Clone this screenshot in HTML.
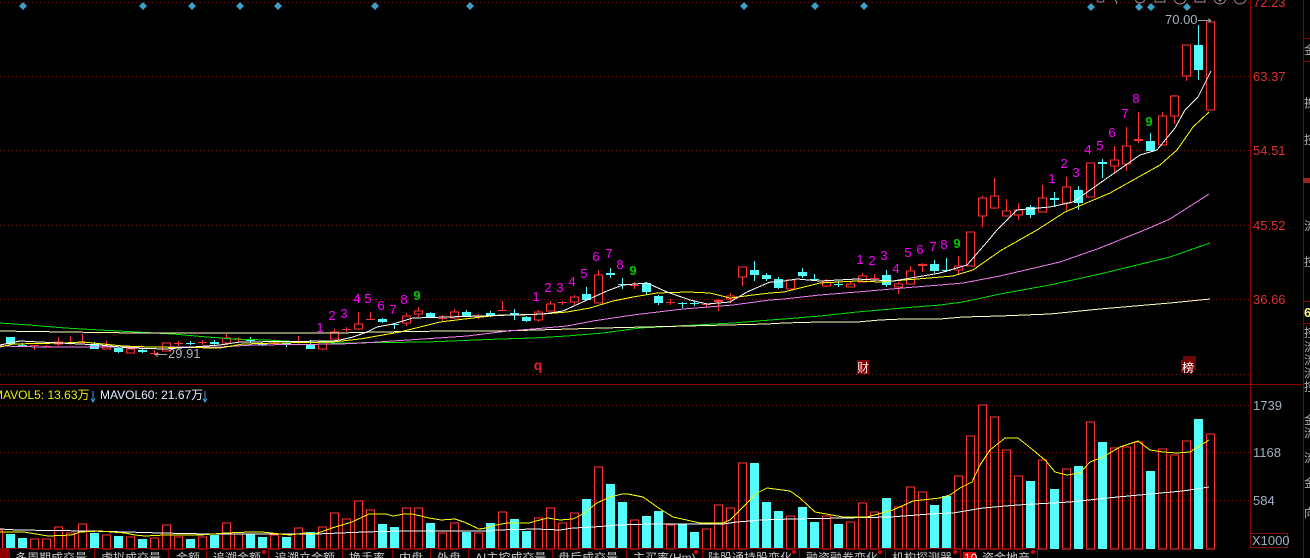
<!DOCTYPE html>
<html><head><meta charset="utf-8"><style>
html,body{margin:0;padding:0;background:#000;width:1310px;height:558px;overflow:hidden}
svg{display:block;position:absolute;left:0;top:0}
text{font-family:"Liberation Sans","Noto Sans CJK SC",sans-serif}
.n{font-size:13px;fill:#ff00ff;text-anchor:middle}
.g{font-size:13px;fill:#00c800;text-anchor:middle;font-weight:bold}
.a{font-size:13px;fill:#e03030}
.v{font-size:13px;fill:#a0b0c0}
.t{font-size:12px;fill:#c8c8c8;font-family:"Liberation Sans","Noto Sans CJK SC",sans-serif}
.r{font-size:12px;fill:#b0b0b0;font-family:"Liberation Sans","Noto Sans CJK SC",sans-serif}
</style></head><body>
<svg width="1310" height="558" viewBox="0 0 1310 558" xmlns="http://www.w3.org/2000/svg">
<rect width="1310" height="558" fill="#000"/>
<g shape-rendering="crispEdges">
<path d="M0 2.500H1250M0 76.500H1250M0 150.500H1250M0 225.500H1250M0 299.500H1250M0 374.500H1250M0 405.500H1250M0 452.500H1250M0 500.500H1250" stroke="#8c1010" stroke-dasharray="1 3" fill="none"/>
<path d="M0 384.500H1303M1250.500 0V548M1303.500 0V558M1303 38.500H1310M1303 61.500H1310M1303 301.500H1310M1303 323.500H1310" stroke="#8c0000" fill="none"/>
<rect x="1303" y="178" width="7" height="5" fill="#a02018"/>

<!-- red wicks -->
<path stroke="#ff3232" fill="none" d="M34.500 345V350M46.500 345V347M58.500 337V346M70.500 336V345M82.500 334V343M106.500 341V349M130.500 349V353M154.500 350V355M178.500 341V346M202.500 340V345M226.500 334V345M238.500 337V342M274.500 339V345M298.500 336V345M322.500 341V350M334.500 329V339M346.500 327V332M358.500 312V330M370.500 312V320M406.500 313V326M418.500 307V317M442.500 315V321M454.500 309V318M478.500 314V319M502.500 301V310M538.500 310V322M550.500 301V311M562.500 301V305M574.500 295V305M598.500 270V303M634.500 282V289M670.500 299V305M706.500 303V308M718.500 299V311M730.500 293V303M742.500 277V286M826.500 279V287M850.500 282V287M862.500 273V282M874.500 274V282M898.500 282V294M910.500 266V284M922.500 263V272M958.500 256V275M982.500 196V227M994.500 178V209M1006.500 199V216M1018.500 203V220M1042.500 185V212M1066.500 177V210M1114.500 146V173M1126.500 127V171M1138.500 112V143M1162.500 112V145M1174.500 95V124M1186.500 45V81"/>
<!-- red doji -->
<path stroke="#ff3232" fill="none" d="M30 345.500h9M42 346.500h9M66 343.500h9M78 342.500h9M150 353.500h9M174 343.500h9M198 342.500h9M234 339.500h9M270 343.500h9M294 342.500h9M342 329.500h9M366 319.500h9M438 318.500h9M474 316.500h9M498 310.500h9M558 302.500h9M630 285.500h9M666 302.500h9M702 304.500h9M870 278.500h9"/>
<path stroke="#ff3232" stroke-width="2" fill="none" d="M714 301h9M918 265h9M1134 140h9"/>
<!-- red bodies -->
<path stroke="#ff3232" fill="#000" d="M54.500 342h8V344h-8zM102.500 346h8V349h-8zM126.500 349h8V353h-8zM162.500 343h8V351h-8zM222.500 338h8V343h-8zM318.500 342h8V349h-8zM330.500 332h8V339h-8zM354.500 324h8V329h-8zM402.500 316h8V323h-8zM414.500 311h8V314h-8zM450.500 312h8V318h-8zM534.500 312h8V320h-8zM546.500 304h8V311h-8zM570.500 297h8V302h-8zM594.500 275h8V303h-8zM726.500 296h8V299h-8zM738.500 267h8V277h-8zM786.500 280h8V289h-8zM822.500 282h8V286h-8zM846.500 284h8V287h-8zM858.500 276h8V282h-8zM894.500 284h8V287h-8zM906.500 271h8V284h-8zM954.500 266h8V270h-8zM966.500 232h8V266h-8zM978.500 198h8V216h-8zM990.500 196h8V208h-8zM1002.500 211h8V216h-8zM1014.500 210h8V215h-8zM1038.500 198h8V212h-8zM1062.500 187h8V203h-8zM1086.500 163h8V197h-8zM1110.500 160h8V166h-8zM1122.500 146h8V164h-8zM1158.500 116h8V145h-8zM1170.500 96h8V116h-8zM1182.500 45h8V76h-8zM1206.500 22h8V110h-8z"/>
<!-- cyan wicks -->
<path stroke="#54fcfc" fill="none" d="M22.500 343V345M94.500 342V349M118.500 347V353M142.500 349V353M190.500 341V345M214.500 340V345M250.500 337V343M262.500 342V346M286.500 342V347M310.500 340V349M382.500 318V323M394.500 323V329M430.500 312V317M466.500 310V316M490.500 311V317M514.500 309V320M526.500 316V322M586.500 287V300M610.500 268V278M622.500 278V289M646.500 282V295M658.500 295V305M682.500 302V308M694.500 301V306M754.500 261V281M766.500 273V281M778.500 277V289M802.500 268V278M814.500 274V281M838.500 281V287M886.500 270V287M934.500 260V273M946.500 258V272M1030.500 205V218M1054.500 192V207M1078.500 186V210M1102.500 159V178M1150.500 133V151M1198.500 25V80"/>
<path stroke="#54fcfc" fill="none" d="M18 345.500h9M186 343.500h9M282 343.500h9M390 324.500h9M618 284.500h9M678 303.500h9M690 303.500h9M810 279.500h9M834 284.500h9M942 270.500h9"/>
<path stroke="#54fcfc" stroke-width="2" fill="none" d="M210 343h9M510 314h9M606 274h9M1050 199h9M1098 163h9"/>
<path fill="#54fcfc" d="M6 337h9V344h-9zM90 344h9V349h-9zM114 348h9V352h-9zM138 350h9V352h-9zM246 339h9V341h-9zM258 343h9V345h-9zM306 345h9V349h-9zM378 319h9V322h-9zM426 313h9V317h-9zM462 312h9V316h-9zM486 313h9V316h-9zM522 317h9V321h-9zM582 294h9V300h-9zM642 283h9V292h-9zM654 296h9V303h-9zM750 270h9V275h-9zM762 275h9V279h-9zM774 279h9V288h-9zM798 272h9V276h-9zM882 275h9V285h-9zM930 264h9V271h-9zM1026 207h9V215h-9zM1074 190h9V203h-9zM1146 141h9V151h-9zM1194 45h9V70h-9z"/>

<!-- price MAs -->
<polyline fill="none" stroke="#00e000" points="0,323 29,325 65,328 100,330 137,332 173,334 207,337 233,339 267,340 303,342 340,343 427,342 500,339 533,338 567,336 603,333 640,328 677,326 733,323 770,320 784,319 820,316 857,312 880,310 903,308 940,305 963,302 1000,294 1050,285 1100,274 1170,257 1210,243"/>
<polyline fill="none" stroke="#ffffc0" points="0,331 65,332 137,333 270,333 340,333 377,332 447,331 500,331 537,330 603,328 687,326 767,324 784,323 820,322 857,322 880,320 903,319 940,319 963,317 1000,316 1050,314 1100,309 1170,303 1210,299"/>
<polyline fill="none" stroke="#f080f0" points="0,346 42,347 65,347 87,347 133,347 167,347 220,347 253,345 340,344 363,343 423,339 467,336 508,331 533,329 567,326 593,321 633,315 683,309 733,305 770,300 784,299 820,295 857,292 880,290 903,288 940,285 963,283 1000,276 1060,262 1100,248 1147,229 1170,219 1209,194"/>
<polyline fill="none" stroke="#ffff00" points="0,347 13,344 63,343 83,342 123,346 150,347 220,348 243,344 277,343 333,342 360,339 400,332 440,322 473,318 500,315 520,315 543,314 567,312 590,308 613,301 633,297 657,293 688,292 710,293 730,298 753,295 770,293 784,292 820,283 857,281 880,282 917,279 953,276 973,270 1000,251 1037,230 1065,212 1110,193 1160,165 1177,150 1193,127 1209,112"/>
<polyline fill="none" stroke="#ffffff" points="0,345 20,341 60,343 100,345 130,348 165,349 220,345 240,342 333,341 340,340 353,337 367,332 377,327 393,324 413,318 447,317 513,315 543,314 563,311 587,300 607,291 623,285 647,283 667,292 690,300 707,304 730,302 747,292 770,282 777,282 797,279 820,281 857,279 893,281 917,277 940,273 967,265 987,242 997,230 1017,210 1050,207 1073,202 1093,188 1140,155 1157,150 1175,128 1185,110 1198,97 1211,71"/>

<!-- volume -->
<path stroke="#ff3232" fill="none" d="M-5.500 530h8V549h-8zM30.500 539h8V549h-8zM42.500 539h8V549h-8zM54.500 527h8V549h-8zM66.500 533h8V549h-8zM78.500 524h8V549h-8zM102.500 535h8V549h-8zM126.500 537h8V549h-8zM150.500 538h8V549h-8zM162.500 525h8V549h-8zM174.500 537h8V549h-8zM198.500 537h8V549h-8zM222.500 523h8V549h-8zM234.500 534h8V549h-8zM270.500 535h8V549h-8zM294.500 528h8V549h-8zM318.500 527h8V549h-8zM330.500 513h8V549h-8zM342.500 519h8V549h-8zM354.500 501h8V549h-8zM366.500 510h8V549h-8zM402.500 508h8V549h-8zM414.500 508h8V549h-8zM438.500 533h8V549h-8zM450.500 523h8V549h-8zM474.500 533h8V549h-8zM498.500 512h8V549h-8zM534.500 518h8V549h-8zM546.500 508h8V549h-8zM558.500 523h8V549h-8zM570.500 513h8V549h-8zM594.500 467h8V549h-8zM630.500 520h8V549h-8zM666.500 525h8V549h-8zM702.500 529h8V549h-8zM714.500 505h8V549h-8zM726.500 508h8V549h-8zM738.500 463h8V549h-8zM786.500 516h8V549h-8zM822.500 516h8V549h-8zM846.500 522h8V549h-8zM858.500 503h8V549h-8zM870.500 512h8V549h-8zM894.500 507h8V549h-8zM906.500 487h8V549h-8zM918.500 492h8V549h-8zM954.500 476h8V549h-8zM966.500 436h8V549h-8zM978.500 405h8V549h-8zM990.500 417h8V549h-8zM1002.500 450h8V549h-8zM1014.500 476h8V549h-8zM1038.500 460h8V549h-8zM1062.500 469h8V549h-8zM1086.500 422h8V549h-8zM1110.500 448h8V549h-8zM1122.500 447h8V549h-8zM1134.500 442h8V549h-8zM1158.500 449h8V549h-8zM1170.500 455h8V549h-8zM1182.500 441h8V549h-8zM1206.500 434h8V549h-8z"/>
<path fill="#54fcfc" d="M6 534h9V549h-9zM18 538h9V549h-9zM90 533h9V549h-9zM114 536h9V549h-9zM138 539h9V549h-9zM186 539h9V549h-9zM210 535h9V549h-9zM246 534h9V549h-9zM258 537h9V549h-9zM282 537h9V549h-9zM306 532h9V549h-9zM378 524h9V549h-9zM390 527h9V549h-9zM426 523h9V549h-9zM462 532h9V549h-9zM486 523h9V549h-9zM510 519h9V549h-9zM522 531h9V549h-9zM582 499h9V549h-9zM606 484h9V549h-9zM618 502h9V549h-9zM642 516h9V549h-9zM654 511h9V549h-9zM678 524h9V549h-9zM690 532h9V549h-9zM750 463h9V549h-9zM762 502h9V549h-9zM774 511h9V549h-9zM798 507h9V549h-9zM810 522h9V549h-9zM834 524h9V549h-9zM882 498h9V549h-9zM930 505h9V549h-9zM942 496h9V549h-9zM1026 481h9V549h-9zM1050 489h9V549h-9zM1074 466h9V549h-9zM1098 442h9V549h-9zM1146 471h9V549h-9zM1194 419h9V549h-9z"/>
<polyline fill="none" stroke="#ffffff" points="0,529 17,530 88,531 127,532 161,533 208,534 316,534 340,533 364,532 400,531 490,531 496,530 535,529 560,530 573,528 593,527 607,526 617,525 653,524 723,524 737,522 750,521 760,520 793,519 843,518 890,517 917,515 930,514 953,513 983,508 1017,505 1070,502 1107,498 1150,494 1183,491 1209,487"/>
<polyline fill="none" stroke="#ffff00" points="0,532 24,532 36,534 48,536 72,535 80,532 100,531 112,532 125,533 135,535 145,536 165,535 200,535 226,533 250,532 262,532 280,534 290,535 305,533 314,534 321,532 332,528 352,522 369,514 386,514 393,516 404,514 412,514 421,516 429,518 441,520 455,519 464,522 479,529 486,528 496,525 507,523 529,523 536,521 548,518 560,520 573,519 583,514 597,503 610,497 622,494 628,494 643,497 660,509 673,517 700,523 723,523 730,520 743,507 757,493 767,488 790,491 800,498 815,512 843,517 867,517 893,510 913,501 940,498 950,495 960,488 972,482 980,465 990,450 1005,438 1018,438 1033,450 1045,460 1055,472 1067,475 1080,473 1090,462 1103,457 1120,447 1138,441 1150,450 1163,452 1177,453 1190,452 1209,440"/>

<!-- bottom bar -->
<path stroke="#8c0000" fill="none" d="M0 548.500H1037M9.500 549V558M94.500 549V558M168.500 549V558M206.500 549V558M268.500 549V558M342.500 549V558M392.500 549V558M430.500 549V558M468.500 549V558M552.500 549V558M626.500 549V558M702.500 549V558M799.500 549V558M885.500 549V558M960.500 549V558M1037.500 549V558"/>
<rect x="0" y="549" width="9" height="9" fill="#8c0000"/>
<rect x="963" y="552" width="13" height="6" fill="#e00000"/>
<path d="M1250.500 533.500H1287.500V547.500H1250.500z" stroke="#7a1010" fill="none"/>
<rect x="857" y="360" width="12" height="14" fill="#800000"/>
<rect x="1183" y="356" width="13" height="14" fill="#6a0808"/>
<rect x="1181" y="360" width="13" height="13" fill="#800000"/>
</g>

<!-- diamonds -->
<g fill="#3aa0c8">
<path d="M23 2l4 4-4 4-4-4zM143 2l4 4-4 4-4-4zM192 2l4 4-4 4-4-4zM240 2l4 4-4 4-4-4zM278 2l4 4-4 4-4-4zM375 2l4 4-4 4-4-4zM470 2l4 4-4 4-4-4zM744 2l4 4-4 4-4-4zM815 2l4 4-4 4-4-4zM864 2l4 4-4 4-4-4zM1091 3l4 4-4 4-4-4zM1139 3l4 4-4 4-4-4zM1151 3l4 4-4 4-4-4zM1187 3l4 4-4 4-4-4z"/>
</g>
<!-- top clipped icons -->
<g fill="none" stroke="#909090" stroke-width="1">
<path d="M1097 0l1 2 5 0 1-2"/>
<path d="M1115 0l2 2-1 2"/>
<circle cx="1140" cy="-2" r="5"/>
<path d="M1155 -4h10v6h-10z"/>
<circle cx="1180" cy="-2" r="6"/>
<path d="M1195 -4h10v6h-10z"/>
<circle cx="1220" cy="-2" r="6"/>
<circle cx="1240" cy="-2" r="6"/>
</g>
<circle cx="1220" cy="0" r="1.500" fill="#909090"/>

<!-- TD numbers -->
<g>
<text class="n" x="320" y="332">1</text><text class="n" x="332" y="320">2</text><text class="n" x="344" y="318">3</text><text class="n" x="357" y="303">4</text><text class="n" x="368" y="303">5</text><text class="n" x="381" y="310">6</text><text class="n" x="393" y="314">7</text><text class="n" x="404" y="304">8</text><text class="g" x="417" y="300">9</text>
<text class="n" x="536" y="301">1</text><text class="n" x="548" y="292">2</text><text class="n" x="560" y="292">3</text><text class="n" x="572" y="286">4</text><text class="n" x="584" y="278">5</text><text class="n" x="596" y="261">6</text><text class="n" x="609" y="258">7</text><text class="n" x="620" y="269">8</text><text class="g" x="633" y="275">9</text>
<text class="n" x="860" y="264">1</text><text class="n" x="872" y="265">2</text><text class="n" x="884" y="260">3</text><text class="n" x="896" y="273">4</text><text class="n" x="908" y="257">5</text><text class="n" x="920" y="254">6</text><text class="n" x="933" y="251">7</text><text class="n" x="944" y="249">8</text><text class="g" x="957" y="248">9</text>
<text class="n" x="1052" y="183">1</text><text class="n" x="1064" y="168">2</text><text class="n" x="1076" y="177">3</text><text class="n" x="1088" y="154">4</text><text class="n" x="1100" y="150">5</text><text class="n" x="1112" y="137">6</text><text class="n" x="1125" y="118">7</text><text class="n" x="1136" y="103">8</text><text class="g" x="1149" y="126">9</text>
</g>

<!-- hi/lo -->
<path d="M155 354.500h12M155 354.500l3-2M155 354.500l3 2" stroke="#a0a0a0" fill="none"/>
<text x="168" y="358" font-size="13" fill="#a8b0b8">29.91</text>
<text x="1165" y="24" font-size="13" fill="#a8b0b8">70.00</text>
<path d="M1198 20.500h13M1211 20.500l-3-2M1211 20.500l-3 2" stroke="#a0a0a0" fill="none"/>

<!-- axis labels -->
<text class="a" x="1253" y="7">72.23</text>
<text class="a" x="1253" y="81">63.37</text>
<text class="a" x="1253" y="155">54.51</text>
<text class="a" x="1253" y="230">45.52</text>
<text class="a" x="1253" y="304">36.66</text>
<text class="v" x="1253" y="410">1739</text>
<text class="v" x="1253" y="457">1168</text>
<text class="v" x="1253" y="505">584</text>
<text class="v" x="1252" y="545" font-size="13">X1000</text>

<!-- event marks -->
<text x="538" y="370" font-size="14" fill="#e82020" text-anchor="middle" font-weight="bold">q</text>
<text x="863" y="372" font-size="12" fill="#ffe0e0" text-anchor="middle">财</text>
<text x="1188" y="372" font-size="12" fill="#ffffff" text-anchor="middle">榜</text>

<!-- legend -->
<text x="-7" y="399" font-size="12" fill="#f0f000">MAVOL5: 13.63万</text>
<text x="100" y="399" font-size="12" fill="#e0f0ff">MAVOL60: 21.67万</text>
<path d="M93 391V401.500M91 398.500l2 3.500 2-3.500M205 391V401.500M203 398.500l2 3.500 2-3.500" stroke="#3aa0e0" fill="none"/>

<!-- tabs -->
<g>
<text class="t" x="15" y="562">多周期成交量</text>
<text class="t" x="101" y="562">虚拟成交量</text>
<text class="t" x="176" y="562">金额</text>
<text class="t" x="213" y="562">追溯金额</text>
<text class="t" x="275" y="562">追溯立金额</text>
<text class="t" x="349" y="562">换手率</text>
<text class="t" x="399" y="562">内盘</text>
<text class="t" x="437" y="562">外盘</text>
<text class="t" x="475" y="562">AI主控成交量</text>
<text class="t" x="558" y="562">盘后成交量</text>
<text class="t" x="633" y="562">主买率(Hm)</text>
<text class="t" x="708" y="562">陆股通持股变化</text>
<text class="t" x="806" y="562">融资融券变化</text>
<text class="t" x="892" y="562">机构探测器</text>
<text x="964" y="562" font-size="12" fill="#fff">10</text>
<text class="t" x="982" y="562">资金地产</text>
</g>
<g fill="#e00000">
<circle cx="264" cy="552" r="2"/><circle cx="696" cy="552" r="2"/><circle cx="794" cy="552" r="2"/><circle cx="880" cy="552" r="2"/><circle cx="955" cy="552" r="2"/><circle cx="1033" cy="552" r="2"/>
</g>

<!-- right clipped panel -->
<g>
<text class="r" x="1304" y="54">金</text>
<text class="r" x="1304" y="107">换</text>
<text class="r" x="1304" y="144">控</text>
<text class="r" x="1304" y="230">流</text>
<text class="r" x="1304" y="266">控</text>
<text x="1304" y="317" font-size="13" fill="#ffff80" font-weight="bold">6</text>
<text class="r" x="1304" y="337">控</text>
<text class="r" x="1304" y="351">流</text>
<text class="r" x="1304" y="364">流</text>
<text class="r" x="1304" y="377">流</text>
<text class="r" x="1304" y="391">控</text>
<text class="r" x="1304" y="424">金</text>
<text class="r" x="1304" y="437">流</text>
<text class="r" x="1304" y="462">流</text>
<text class="r" x="1304" y="487">金</text>
<text class="r" x="1304" y="517">向</text>
</g>
</svg>
</body></html>
